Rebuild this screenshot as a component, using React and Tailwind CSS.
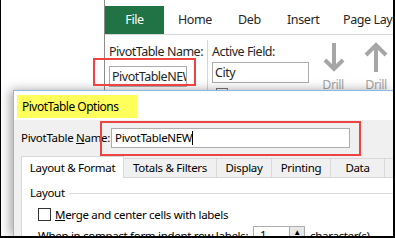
export default function App() {
  return (
    <div className="relative w-[395px] h-[238px] overflow-hidden bg-white border-l border-r-2 border-b-2 border-black font-['Noto_Sans',sans-serif] text-black">
      {/* Excel ribbon background */}
      <div className="flex h-full">
        <div className="w-[103px] shrink-0" />
        <div className="flex-1 border-l border-[#8c8c8c] flex flex-col min-w-0">
          <div className="h-[35px] shrink-0 border-b border-[#d6d6d6] flex items-end text-[12.5px] tracking-[-0.4px] text-[#262626] whitespace-nowrap">
            <div className="w-[59px] h-[28px] shrink-0 bg-[#217346] text-white flex items-center justify-center">File</div>
            <div className="w-[74px] h-[28px] shrink-0 flex items-center pl-[14px]">Home</div>
            <div className="w-[49px] h-[28px] shrink-0 flex items-center">Deb</div>
            <div className="w-[56px] h-[28px] shrink-0 flex items-center">Insert</div>
            <div className="h-[28px] flex items-center">Page Layout</div>
          </div>
          <div className="flex flex-1 text-[12.5px] tracking-[-0.5px] text-[#262626] whitespace-nowrap">
            <div className="w-[103px] shrink-0 border-r border-[#d6d6d6] mt-[5px] pl-[4px] pt-[3px] flex flex-col">
              <div className="leading-[18px]">PivotTable Name:</div>
              <div className="mt-[5px] w-[78px] h-[21px] border border-[#acacac] bg-white pl-[2px] leading-[19px] overflow-hidden">PivotTableNEW</div>
              <div className="mt-[4px] ml-[4px] w-[12px] h-[12px] border border-[#777]" />
            </div>
            <div className="flex-1 pl-[4px] pt-[8px] flex min-w-0">
              <div className="w-[110px] shrink-0 flex flex-col">
                <div className="leading-[18px]">Active Field:</div>
                <div className="mt-[1px] w-[97px] h-[21px] border border-[#acacac] bg-white pl-[2px] leading-[19px]">City</div>
                <div className="mt-[5px] ml-[4px] w-[12px] h-[12px] border border-[#777]" />
              </div>
              <div className="flex flex-col items-center w-[24px] text-[#a6a6a6]">
                <svg width="22" height="30" viewBox="0 0 22 30" className="mt-[-1px]">
                  <path d="M11 1 V27 M2 18 L11 27 L20 18" fill="none" stroke="#a6a6a6" strokeWidth="4" />
                </svg>
                <div className="leading-[16px] mt-[5px] -ml-[2px]">Drill</div>
              </div>
              <div className="flex flex-col items-center w-[24px] ml-[18px] text-[#a6a6a6]">
                <svg width="24" height="30" viewBox="0 0 24 30" className="mt-[-1px]">
                  <path d="M12 3 V30 M2 13 L12 3 L22 13" fill="none" stroke="#a6a6a6" strokeWidth="4" />
                </svg>
                <div className="leading-[16px] mt-[5px]">Drill</div>
              </div>
            </div>
          </div>
        </div>
      </div>

      {/* Dialog window */}
      <div className="absolute left-[12px] top-[90px] right-0 bottom-0 border-l border-t border-[#8fb8e6] bg-[#f0f0f0] shadow-[-3px_0_10px_rgba(0,0,0,0.35)] flex flex-col text-[11.5px] tracking-[-0.3px] whitespace-nowrap">
        <div className="h-[29px] shrink-0 bg-white pl-[3px] pt-[4px]">
          <div className="w-[120px] h-[23px] bg-[#ffff5c] pl-[5px] flex items-center text-[12px] tracking-[-0.5px]">PivotTable Options</div>
        </div>
        <div className="h-[36px] shrink-0 flex items-center pl-[7px]">
          <div className="w-[90px] shrink-0">PivotTable <span className="underline">N</span>ame:</div>
          <div className="w-[239px] h-[20px] shrink-0 border border-[#adadad] bg-white pl-[3px] flex items-center">
            <span>PivotTableNEW</span>
            <span className="w-px h-[14px] bg-black" />
          </div>
        </div>
        <div className="flex items-end pl-[7px] h-[21px] shrink-0 relative z-10">
          <div className="w-[103px] h-[22px] shrink-0 bg-white border-l border-t border-r border-[#d9d9d9] flex items-center justify-center -mb-px">Layout &amp; Format</div>
          <div className="w-[93px] h-[19px] shrink-0 border-t border-r border-[#d9d9d9] flex items-center justify-center">Totals &amp; Filters</div>
          <div className="w-[55px] h-[19px] shrink-0 border-t border-r border-[#d9d9d9] flex items-center justify-center">Display</div>
          <div className="w-[59px] h-[19px] shrink-0 border-t border-r border-[#d9d9d9] flex items-center justify-center">Printing</div>
          <div className="w-[54px] h-[19px] shrink-0 border-t border-r border-[#d9d9d9] flex items-center justify-center">Data</div>
          <div className="w-[54px] h-[19px] shrink-0 border-t border-[#d9d9d9] flex items-center pl-[8px]">Alt Text</div>
        </div>
        <div className="flex-1 ml-[7px] bg-white border-l border-t border-[#d9d9d9] pt-[7px] pl-[8px]">
          <div className="flex items-center h-[16px]">
            <span>Layout</span>
            <div className="flex-1 h-px bg-[#dcdcdc] ml-[4px]" />
          </div>
          <div className="flex items-center mt-[7px] ml-[8px] h-[13px]">
            <div className="w-[13px] h-[13px] border border-[#333] bg-white shrink-0" />
            <span className="ml-[4px]"><span className="underline">M</span>erge and center cells with labels</span>
          </div>
          <div className="flex items-start mt-[5px] ml-[8px] h-[18px]">
            <span className="w-[215px] shrink-0 leading-[18px] mt-[1px]">When in compact form indent row labels:</span>
            <div className="w-[52px] h-[18px] border border-[#adadad] bg-white flex items-stretch shrink-0">
              <span className="flex-1 pl-[6px] leading-[16px]">1</span>
              <div className="w-[15px] border-l border-[#adadad] bg-[#e8e8e8] flex items-start justify-center text-[8px] leading-[10px]">▲</div>
            </div>
            <span className="ml-[5px] leading-[18px] mt-[1px]">character(s)</span>
          </div>
        </div>
      </div>

      {/* Annotation boxes */}
      <div className="absolute left-[92px] top-[58px] w-[103px] h-[28px] border-2 border-[#ee4343]" />
      <div className="absolute left-[99px] top-[121px] w-[261px] h-[35px] border-2 border-[#ee4343]" />
    </div>
  );
}
